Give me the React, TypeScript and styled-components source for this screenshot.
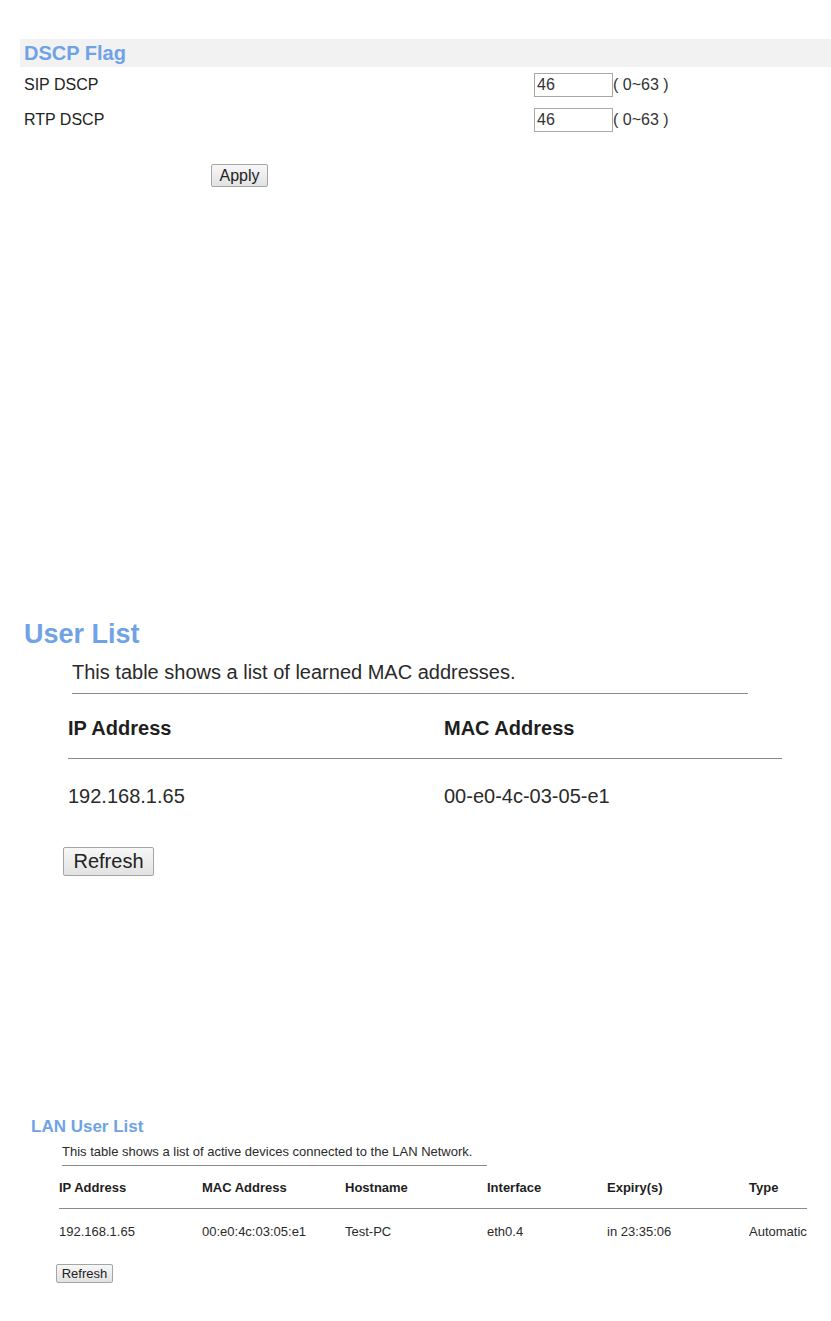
import React from "react";
import styled, { createGlobalStyle } from "styled-components";

const Global = createGlobalStyle`
  html, body {
    margin: 0;
    padding: 0;
    background: #ffffff;
    font-family: "Liberation Sans", Arial, sans-serif;
    color: #222222;
  }
  * { box-sizing: border-box; }
`;

const Page = styled.div`
  width: 831px;
  display: flex;
  flex-direction: column;
  padding-top: 39px;
`;

/* ---------- DSCP section ---------- */
const DscpSection = styled.section`
  margin-left: 20px;
  display: flex;
  flex-direction: column;
`;

const HeaderBand = styled.div`
  height: 28px;
  line-height: 28px;
  background: #f2f2f2;
  padding-left: 4px;
  font-size: 20px;
  font-weight: bold;
  color: #6fa3e6;
`;

const FormRow = styled.div`
  display: grid;
  grid-template-columns: 510px auto;
  align-items: center;
  height: 35px;
  padding-left: 4px;
  font-size: 16px;
`;

const Field = styled.div`
  display: flex;
  align-items: center;
`;

const NumInput = styled.input`
  width: 79px;
  height: 24px;
  border: 1px solid #a9a9a9;
  padding: 0 2px;
  font-family: "Liberation Sans", Arial, sans-serif;
  font-size: 16px;
  color: #333333;
  background: #ffffff;
  outline: none;
`;

const Hint = styled.span`
  font-size: 16px;
  color: #333333;
`;

const Button = styled.button<{ $w: number; $h: number; $fs: number; $ml: number; $mt: number }>`
  width: ${(p) => p.$w}px;
  height: ${(p) => p.$h}px;
  margin-left: ${(p) => p.$ml}px;
  margin-top: ${(p) => p.$mt}px;
  padding: 0;
  font-family: "Liberation Sans", Arial, sans-serif;
  font-size: ${(p) => p.$fs}px;
  color: #222222;
  background: linear-gradient(#f7f7f7, #e2e2e2);
  border: 1px solid #a5a5a5;
  border-radius: 2px;
  align-self: flex-start;
  cursor: pointer;
`;

/* ---------- User List section ---------- */
const UserSection = styled.section`
  margin-top: 431px;
  display: flex;
  flex-direction: column;
`;

const BigTitle = styled.h1`
  margin: 0 0 0 24px;
  font-size: 27px;
  line-height: 32px;
  font-weight: bold;
  color: #6fa3e6;
`;

const Desc = styled.div<{ $ml: number; $w: number; $fs: number; $lh: number; $mt: number; $pb: number }>`
  margin-left: ${(p) => p.$ml}px;
  margin-top: ${(p) => p.$mt}px;
  width: ${(p) => p.$w}px;
  font-size: ${(p) => p.$fs}px;
  line-height: ${(p) => p.$lh}px;
  padding-bottom: ${(p) => p.$pb}px;
  border-bottom: 1px solid #8a8a8a;
  color: #2a2a2a;
  white-space: nowrap;
`;

const Table = styled.div<{ $ml: number; $cols: string }>`
  margin-left: ${(p) => p.$ml}px;
  display: grid;
  grid-template-columns: ${(p) => p.$cols};
`;

const HeadCell = styled.div<{ $fs: number; $lh: number; $pt: number; $pb: number }>`
  font-size: ${(p) => p.$fs}px;
  line-height: ${(p) => p.$lh}px;
  font-weight: bold;
  padding-top: ${(p) => p.$pt}px;
  padding-bottom: ${(p) => p.$pb}px;
  border-bottom: 1px solid #8a8a8a;
  color: #1e1e1e;
  white-space: nowrap;
`;

const DataCell = styled.div<{ $fs: number; $lh: number; $pt: number; $pb: number }>`
  font-size: ${(p) => p.$fs}px;
  line-height: ${(p) => p.$lh}px;
  padding-top: ${(p) => p.$pt}px;
  padding-bottom: ${(p) => p.$pb}px;
  color: #2a2a2a;
  white-space: nowrap;
`;

/* ---------- LAN User List section ---------- */
const LanSection = styled.section`
  margin-top: 241px;
  display: flex;
  flex-direction: column;
`;

const SmallTitle = styled.h2`
  margin: 0 0 0 31px;
  font-size: 17px;
  line-height: 20px;
  font-weight: bold;
  color: #6fa3e6;
`;

const dscpRows = [
  { label: "SIP DSCP", value: "46" },
  { label: "RTP DSCP", value: "46" },
];

const lanHeaders = ["IP Address", "MAC Address", "Hostname", "Interface", "Expiry(s)", "Type"];
const lanRow = ["192.168.1.65", "00:e0:4c:03:05:e1", "Test-PC", "eth0.4", "in 23:35:06", "Automatic"];

export default function App() {
  return (
    <>
      <Global />
      <Page>
        <DscpSection>
          <HeaderBand>DSCP Flag</HeaderBand>
          {dscpRows.map((r) => (
            <FormRow key={r.label}>
              <span>{r.label}</span>
              <Field>
                <NumInput defaultValue={r.value} />
                <Hint>( 0~63 )</Hint>
              </Field>
            </FormRow>
          ))}
          <Button $w={57} $h={23} $fs={16} $ml={191} $mt={27}>
            Apply
          </Button>
        </DscpSection>

        <UserSection>
          <BigTitle>User List</BigTitle>
          <Desc $ml={72} $w={676} $fs={20} $lh={24} $mt={10} $pb={9}>
            This table shows a list of learned MAC addresses.
          </Desc>
          <Table $ml={68} $cols="376px 338px">
            <HeadCell $fs={20} $lh={24} $pt={22} $pb={18}>IP Address</HeadCell>
            <HeadCell $fs={20} $lh={24} $pt={22} $pb={18}>MAC Address</HeadCell>
            <DataCell $fs={20} $lh={24} $pt={25} $pb={25}>192.168.1.65</DataCell>
            <DataCell $fs={20} $lh={24} $pt={25} $pb={25}>00-e0-4c-03-05-e1</DataCell>
          </Table>
          <Button $w={91} $h={29} $fs={20} $ml={63} $mt={14}>
            Refresh
          </Button>
        </UserSection>

        <LanSection>
          <SmallTitle>LAN User List</SmallTitle>
          <Desc $ml={62} $w={425} $fs={13} $lh={15} $mt={7} $pb={6}>
            This table shows a list of active devices connected to the LAN Network.
          </Desc>
          <Table $ml={59} $cols="143px 143px 142px 120px 142px 58px">
            {lanHeaders.map((h) => (
              <HeadCell key={h} $fs={13} $lh={16} $pt={14} $pb={12}>
                {h}
              </HeadCell>
            ))}
            {lanRow.map((c) => (
              <DataCell key={c} $fs={13} $lh={16} $pt={15} $pb={12}>
                {c}
              </DataCell>
            ))}
          </Table>
          <Button $w={57} $h={19} $fs={13} $ml={56} $mt={12}>
            Refresh
          </Button>
        </LanSection>
      </Page>
    </>
  );
}
